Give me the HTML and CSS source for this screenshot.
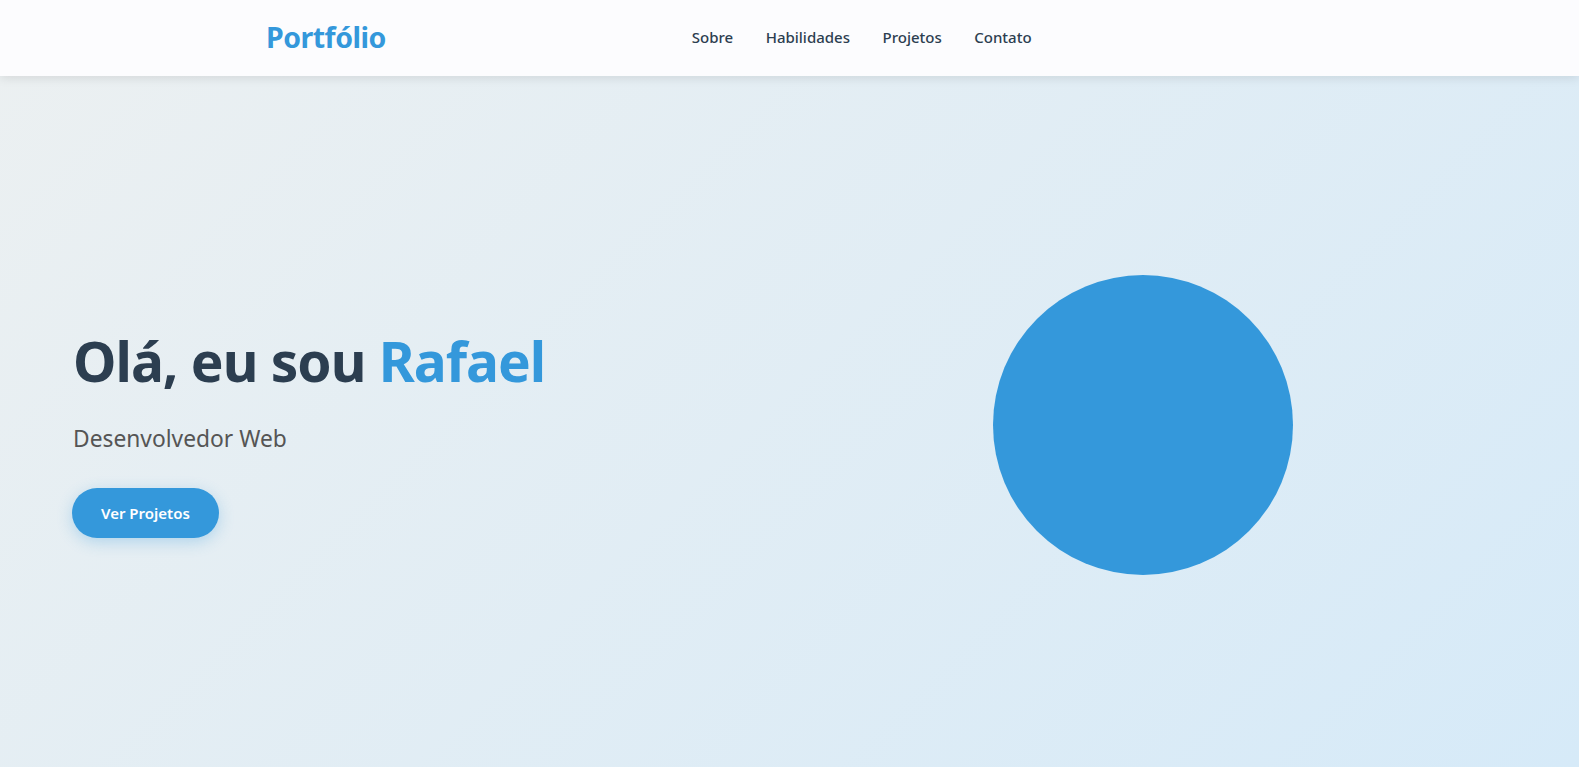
FILE: index.html
```html
<!DOCTYPE html>
<html lang="pt-BR">
<head>
<meta charset="utf-8">
<title>Portfólio</title>
<link rel="stylesheet" href="styles.css">
</head>
<body>
<header class="site-header">
  <div class="header-inner">
    <a class="logo" href="#">Portfólio</a>
    <nav class="main-nav">
      <a href="#sobre">Sobre</a>
      <a href="#habilidades">Habilidades</a>
      <a href="#projetos">Projetos</a>
      <a href="#contato">Contato</a>
    </nav>
  </div>
</header>
<section class="hero">
  <div class="hero-text">
    <h1 class="hero-title">Olá, eu sou <span class="highlight">Rafael</span></h1>
    <p class="hero-subtitle">Desenvolvedor Web</p>
    <a class="btn" href="#projetos">Ver Projetos</a>
  </div>
  <div class="hero-image">
    <div class="avatar"></div>
  </div>
</section>
</body>
</html>
```
FILE: styles.css
```css
* { box-sizing: border-box; margin: 0; padding: 0; }
html, body { height: 100%; }
body {
  font-family: "Noto Sans", "Open Sans", sans-serif;
  color: #2c3e50;
  background: linear-gradient(135deg, #ecf0f1 0%, #d6eaf8 100%);
  min-height: 100vh;
  overflow: hidden;
}
a { text-decoration: none; }
.site-header {
  position: relative;
  z-index: 2;
  height: 76px;
  background: #fcfcfe;
  box-shadow: 0 2px 10px rgba(0,0,0,0.1);
}
.header-inner {
  height: 100%;
  display: flex;
  align-items: center;
  padding-left: 266px;
  padding-bottom: 2px;
}
.logo {
  font-size: 28.5px;
  font-weight: 700;
  color: #3498db;
  letter-spacing: -0.5px;
}
.main-nav {
  display: flex;
  gap: 32.5px;
  margin-left: 306px;
}
.main-nav a {
  font-size: 15px;
  font-weight: 500;
  color: #2c3e50;
}
.hero {
  height: calc(100vh - 76px);
  display: grid;
  grid-template-columns: 1fr 1fr;
  align-items: center;
  padding: 7px 79px 0 73px;
}
.hero-title {
  font-size: 55px;
  font-weight: 700;
  line-height: 1.2;
  letter-spacing: -1px;
  color: #2c3e50;
  margin-top: 15px;
  margin-bottom: 29px;
}
.highlight { color: #3498db; }
.hero-subtitle {
  font-size: 22.8px;
  color: #555;
  margin-bottom: 34px;
}
.btn {
  display: inline-block;
  background: #3498db;
  color: #fff;
  font-size: 15px;
  font-weight: 600;
  padding: 15px 29px;
  border-radius: 25px;
  box-shadow: 0 4px 15px rgba(52,152,219,0.3);
  margin-left: -1px;
}
.hero-image {
  display: flex;
  justify-content: center;
}
.avatar {
  width: 300px;
  height: 300px;
  border-radius: 50%;
  background: #3498db;
}
```
